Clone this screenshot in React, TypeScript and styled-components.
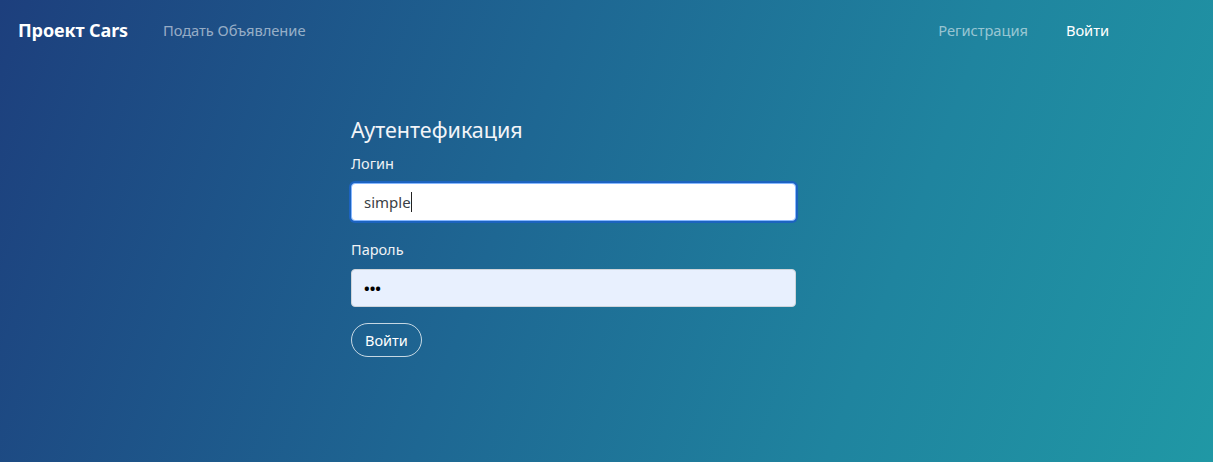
import React from "react";
import styled, { createGlobalStyle } from "styled-components";

const Global = createGlobalStyle`
  html, body { margin: 0; padding: 0; height: 100%; }
  body {
    font-family: "Noto Sans", "Open Sans", sans-serif;
    color: #fff;
  }
  #root { min-height: 100%; }
`;

const Page = styled.div`
  width: 100%;
  height: 462px;
  overflow: hidden;
  background: linear-gradient(110deg, #1d3f7d 0%, #1e6793 42%, #1f849f 72%, #2098a5 100%);
  display: flex;
  flex-direction: column;
`;

const Nav = styled.nav`
  height: 60px;
  display: flex;
  align-items: center;
  padding: 0 18px;
`;

const Brand = styled.a`
  font-size: 18px;
  font-weight: 700;
  color: #fff;
  text-decoration: none;
  margin-right: 27px;
  letter-spacing: -0.1px;
`;

const NavLink = styled.a<{ $active?: boolean }>`
  font-size: 14.7px;
  color: ${(p) => (p.$active ? "#fff" : "rgba(255,255,255,0.55)")};
  text-decoration: none;
  padding: 0 8px;
  letter-spacing: -0.05px;
`;

const Spacer = styled.div`
  flex: 1;
`;

const RightNav = styled.div`
  display: flex;
  gap: 22px;
  margin-right: 78px;
`;

const Main = styled.main`
  padding: 56px 0 0 351px;
`;

const Form = styled.form`
  width: 445px;
  display: flex;
  flex-direction: column;
`;

const Title = styled.h2`
  margin: 0 0 9px;
  font-size: 21.5px;
  font-weight: 400;
  color: #f2f4f8;
  line-height: 28px;
`;

const Label = styled.label`
  font-size: 14.5px;
  color: #f0f2f5;
  line-height: 20px;
  margin-bottom: 10px;
`;

const Field = styled.div<{ $focused?: boolean; $autofill?: boolean }>`
  box-sizing: border-box;
  height: 38px;
  border-radius: 4px;
  background: ${(p) => (p.$autofill ? "#e8f0fe" : "#fff")};
  border: 1px solid ${(p) => (p.$focused ? "#86b7fe" : "#ced4da")};
  box-shadow: ${(p) => (p.$focused ? "0 0 0 2px #1c63c0" : "none")};
  display: flex;
  align-items: center;
  padding: 0 12px;
  font-size: 15px;
  color: #3a3f45;
  margin-bottom: 18px;
`;

const Caret = styled.span`
  display: inline-block;
  width: 1px;
  height: 20px;
  background: #222;
`;

const Dots = styled.span`
  font-size: 15px;
  color: #000;
  font-weight: 700;
`;

const Button = styled.button`
  align-self: flex-start;
  margin-top: -2px;
  height: 34px;
  padding: 0 13px;
  border-radius: 17px;
  border: 1px solid rgba(255,255,255,0.75);
  background: transparent;
  color: #fff;
  font-family: inherit;
  font-size: 14.5px;
`;

export default function App() {
  return (
    <Page>
      <Global />
      <Nav>
        <Brand href="#">Проект Cars</Brand>
        <NavLink href="#">Подать Объявление</NavLink>
        <Spacer />
        <RightNav>
          <NavLink href="#">Регистрация</NavLink>
          <NavLink href="#" $active>Войти</NavLink>
        </RightNav>
      </Nav>
      <Main>
        <Form>
          <Title>Аутентефикация</Title>
          <Label>Логин</Label>
          <Field $focused>
            simple<Caret />
          </Field>
          <Label>Пароль</Label>
          <Field $autofill>
            <Dots>•••</Dots>
          </Field>
          <Button type="button">Войти</Button>
        </Form>
      </Main>
    </Page>
  );
}
